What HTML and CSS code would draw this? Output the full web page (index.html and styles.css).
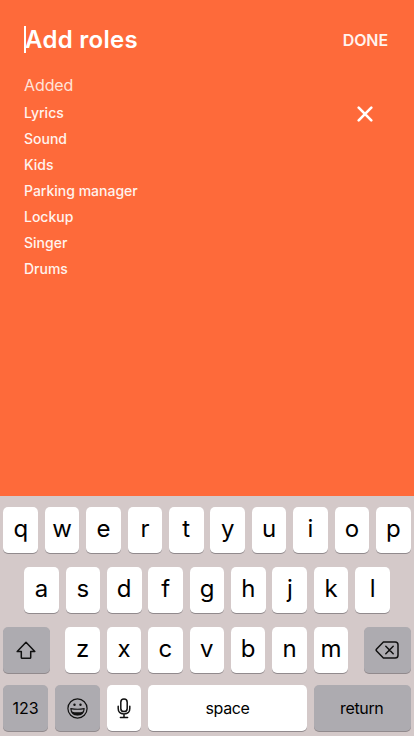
FILE: index.html
```html
<!DOCTYPE html>
<html lang="en">
<head>
<meta charset="utf-8">
<title>Add roles</title>
<link rel="stylesheet" href="styles.css">
</head>
<body>
<main class="screen">
  <header class="header">
    <div class="field"><span class="caret"></span><h1 class="title">Add roles</h1></div>
    <span class="done">DONE</span>
  </header>
  <h2 class="section">Added</h2>
  <ul class="roles">
    <li><span>Lyrics</span><svg class="remove" viewBox="0 0 16 16"><path d="M1.7 1.7l12.6 12.6M14.3 1.7l-12.6 12.6"/></svg></li>
    <li><span>Sound</span></li>
    <li><span>Kids</span></li>
    <li><span>Parking manager</span></li>
    <li><span>Lockup</span></li>
    <li><span>Singer</span></li>
    <li><span>Drums</span></li>
  </ul>
</main>
<section class="keyboard">
  <div class="row"><span class="key">q</span><span class="key">w</span><span class="key">e</span><span class="key">r</span><span class="key">t</span><span class="key">y</span><span class="key">u</span><span class="key">i</span><span class="key">o</span><span class="key">p</span></div>
  <div class="row"><span class="key">a</span><span class="key">s</span><span class="key">d</span><span class="key">f</span><span class="key">g</span><span class="key">h</span><span class="key">j</span><span class="key">k</span><span class="key">l</span></div>
  <div class="row">
    <span class="key dark shift"><svg class="icon" width="20" height="19" viewBox="0 0 20 19"><path d="M10 1.3L1.2 10.6H5.3V16.4Q5.3 17.3 6.2 17.3H13.8Q14.7 17.3 14.7 16.4V10.6H18.8Z"/></svg></span>
    <span class="key">z</span><span class="key">x</span><span class="key">c</span><span class="key">v</span><span class="key">b</span><span class="key">n</span><span class="key">m</span>
    <span class="key dark delete"><svg class="icon" width="24" height="18" viewBox="0 0 24 18"><path d="M8.4 1H20.2Q23 1 23 3.8V14.2Q23 17 20.2 17H8.4L1.6 10Q.6 9 1.6 8ZM10.8 5.2L18.2 12.8M18.2 5.2L10.8 12.8"/></svg></span>
  </div>
  <div class="row bottom">
    <span class="key dark label numbers">123</span>
    <span class="key dark emoji"><svg class="icon" width="21" height="21" viewBox="0 0 21 21"><circle class="face" cx="10.5" cy="10.5" r="9.6"/><circle class="solid" cx="7.5" cy="6.8" r="1.2"/><circle class="solid" cx="13.5" cy="6.8" r="1.2"/><path class="mouth" d="M3.8 10.6Q10.5 12 17.2 10.6C16.8 14.9 14 17 10.5 17S4.2 14.9 3.8 10.6Z"/><path class="solid" d="M4.5 13.4Q10.5 15.3 16.5 13.4C15.4 16 13.2 17.2 10.5 17.2S5.6 16 4.5 13.4Z"/></svg></span>
    <span class="key mic"><svg class="icon" width="14" height="21" viewBox="0 0 14 21"><rect x="3.8" y="1" width="6.4" height="12.6" rx="3.2"/><path d="M1.2 8.2V10.6Q1.2 16 7 16T12.8 10.6V8.2M7 16V19.6M3.4 19.6H10.6"/></svg></span>
    <span class="key label space">space</span>
    <span class="key dark label return">return</span>
  </div>
</section>
</body>
</html>
```
FILE: styles.css
```css
* { box-sizing: border-box; margin: 0; padding: 0; }
body {
  width: 414px;
  height: 736px;
  display: flex;
  flex-direction: column;
  overflow: hidden;
  background: #fe6a3a;
  font-family: Inter, "Liberation Sans", sans-serif;
}
.screen { height: 496px; padding: 25px 26px 0 24px; color: #fff; }
.header { display: flex; justify-content: space-between; align-items: center; height: 29px; }
.field { display: flex; align-items: center; }
.caret { width: 2px; height: 27px; background: #fff; }
.title { margin-left: -1px; font-size: 24px; line-height: 29px; font-weight: 600; letter-spacing: .3px; }
.done { font-size: 16px; line-height: 20px; font-weight: 600; letter-spacing: -.1px; color: #fff3ee; margin-top: 1px; }
.section { margin-top: 21px; font-size: 16px; line-height: 20px; font-weight: 400; letter-spacing: -.1px; color: #ffe3d9; }
.roles { list-style: none; margin-top: 4px; }
.roles li { display: flex; justify-content: space-between; align-items: center; height: 26px; font-size: 14px; font-weight: 500; color: #fff3ee; }
.remove { width: 16px; height: 16px; margin: 4px 15px 0 0; fill: none; stroke: #fff; stroke-width: 2.6; stroke-linecap: round; }
.keyboard { height: 240px; padding: 11px 3px 0; background: #d4c9c9; color: #000; }
.row { display: flex; justify-content: center; gap: 6.8px; height: 47px; margin-bottom: 13px; }
.row:nth-child(3) { margin-bottom: 11px; }
.key {
  display: flex;
  flex: none;
  align-items: center;
  justify-content: center;
  width: 34.6px;
  height: 46.4px;
  padding-bottom: 2.4px;
  border-radius: 5px;
  background: #fff;
  box-shadow: 0 1px 0 #918a8d;
  font-size: 24px;
  line-height: 28px;
}
.dark { background: #adabb0; }
.shift, .delete { width: 46.9px; padding-bottom: 0; }
.shift { margin-right: 8.3px; padding-right: 1px; }
.delete { margin-left: 8.7px; }
.label { font-size: 16px; padding-bottom: 1.4px; letter-spacing: -.35px; }
.bottom { justify-content: flex-start; gap: 6.6px; }
.numbers { width: 45px; letter-spacing: 0; }
.emoji { width: 45.6px; padding-bottom: 0; }
.mic { padding-bottom: 0; }
.space { width: 159.2px; }
.return { width: 97px; padding-right: 1px; }
.icon { fill: none; stroke: #111; stroke-width: 1.5; stroke-linejoin: round; stroke-linecap: round; }
.icon .face { stroke-width: 1.2; }
.icon .solid { fill: #111; stroke: none; }
.icon .mouth { stroke-width: 1.1; }
```
